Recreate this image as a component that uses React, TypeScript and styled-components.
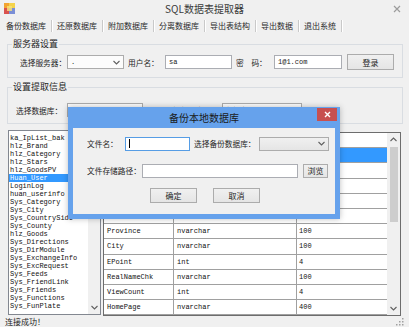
import React from "react";
import styled, { createGlobalStyle } from "styled-components";

const CJK = `"Noto Sans CJK SC", "Liberation Sans", sans-serif`;
const MONO = `"Liberation Mono", "Noto Sans CJK SC", monospace`;

const GlobalStyle = createGlobalStyle`
  html, body {
    margin: 0;
    padding: 0;
    background: #f0f0f0;
  }
  body {
    font-family: ${CJK};
  }
`;

const Window = styled.div`
  position: relative;
  width: 409px;
  height: 327px;
  overflow: hidden;
  background: #f0f0f0;
  display: flex;
  flex-direction: column;
  font-family: ${CJK};
  color: #1e1e1e;
`;

const TitleBar = styled.div`
  flex: none;
  height: 17px;
  display: grid;
  grid-template-columns: 24px 1fr 24px;
  align-items: center;
`;

const Title = styled.div`
  text-align: center;
  font-size: 10px;
  line-height: 17px;
  color: #3a3a3a;
`;

const CloseGlyph = styled.div`
  display: flex;
  justify-content: center;
`;

const TabBar = styled.div`
  flex: none;
  height: 17px;
  display: flex;
  align-items: center;
  padding-left: 1px;
`;

const Tab = styled.div`
  padding: 0 5px;
  font-size: 8px;
  line-height: 12px;
  color: #2a2a2a;
  border-right: 1px solid #c9c9c9;
  box-shadow: 1px 0 0 #fff;
  white-space: nowrap;
`;

const Group = styled.fieldset<{ $mt: number; $pt: number; $pb: number }>`
  margin: ${(p) => p.$mt}px 6px 0 7px;
  padding: ${(p) => p.$pt}px 0 ${(p) => p.$pb}px 0;
  border: 1px solid #d9dde2;
  border-radius: 0;
  min-width: 0;
`;

const Legend = styled.legend`
  margin-left: 4px;
  padding: 0 1px;
  font-size: 9px;
  line-height: 12px;
  color: #1e1e1e;
`;

const Row = styled.div<{ $pl?: number; $mt?: number; $h?: number }>`
  display: flex;
  align-items: center;
  height: ${(p) => p.$h ?? 16}px;
  padding-left: ${(p) => p.$pl ?? 0}px;
  margin-top: ${(p) => p.$mt ?? 0}px;
`;

const Label = styled.div<{ $w: number }>`
  flex: none;
  width: ${(p) => p.$w}px;
  font-size: 7.7px;
  line-height: 11px;
  white-space: pre;
  overflow: hidden;
  color: #1e1e1e;
`;

const Gap = styled.div<{ $w: number }>`
  flex: none;
  width: ${(p) => p.$w}px;
`;

const Combo = styled.div<{ $w: number; $gray?: boolean }>`
  flex: none;
  box-sizing: border-box;
  width: ${(p) => p.$w}px;
  height: 14px;
  border: 1px solid #acacac;
  background: ${(p) =>
    p.$gray ? "linear-gradient(#f0f0f0, #e5e5e5)" : "#fcfcfc"};
  display: flex;
  align-items: center;
  justify-content: space-between;
  padding: 0 3px 0 3px;
  font-family: ${MONO};
  font-size: 7px;
  color: #222;
`;

const TextBox = styled.div<{ $w: number; $focus?: boolean }>`
  flex: none;
  box-sizing: border-box;
  width: ${(p) => p.$w}px;
  height: 14px;
  border: 1px solid ${(p) => (p.$focus ? "#569de5" : "#abadb3")};
  background: #fff;
  display: flex;
  align-items: center;
  padding-left: 3px;
  font-family: ${MONO};
  font-size: 7px;
  color: #222;
`;

const Caret = styled.div`
  width: 1px;
  height: 9px;
  background: #000;
`;

const Button = styled.div<{ $w: number; $h: number }>`
  flex: none;
  box-sizing: border-box;
  width: ${(p) => p.$w}px;
  height: ${(p) => p.$h}px;
  border: 1px solid #acacac;
  background: linear-gradient(#f0f0f0, #e5e5e5);
  display: flex;
  align-items: center;
  justify-content: center;
  font-size: 8px;
  color: #1e1e1e;
`;

const Split = styled.div`
  flex: 1;
  display: flex;
  gap: 2px;
  padding: 0 8px 0 8px;
  margin-top: 6px;
  min-height: 0;
`;

const ListBox = styled.div`
  flex: none;
  box-sizing: border-box;
  width: 93px;
  height: 185px;
  border: 1px solid #828790;
  background: #fff;
  display: flex;
`;

const ListItems = styled.div`
  flex: 1;
  padding-top: 3px;
  overflow: hidden;
`;

const ListItem = styled.div<{ $sel?: boolean }>`
  height: 8px;
  line-height: 8px;
  padding-left: 1px;
  font-family: ${MONO};
  font-size: 7px;
  white-space: nowrap;
  background: ${(p) => (p.$sel ? "#3399ff" : "transparent")};
  color: ${(p) => (p.$sel ? "#fff" : "#111")};
`;

const ScrollCol = styled.div<{ $w: number }>`
  flex: none;
  width: ${(p) => p.$w}px;
  background: #f0f0f0;
  display: flex;
  flex-direction: column;
  align-items: center;
`;

const Arrow = styled.div`
  flex: none;
  width: 100%;
  height: 13px;
  display: flex;
  align-items: center;
  justify-content: center;
`;

const Thumb = styled.div<{ $h: number }>`
  flex: none;
  width: 8px;
  height: ${(p) => p.$h}px;
  margin-top: 1px;
  background: #cdcdcd;
`;

const Spacer = styled.div`
  flex: 1;
`;

const DataGrid = styled.div`
  flex: none;
  box-sizing: border-box;
  width: 298px;
  height: 184px;
  margin-top: 2px;
  border: 1px solid #6d6d6d;
  background: #fff;
  display: flex;
`;

const GridBody = styled.div`
  flex: 1;
  overflow: hidden;
`;

const GridRow = styled.div<{ $sel?: boolean }>`
  box-sizing: border-box;
  height: 15.2px;
  display: grid;
  grid-template-columns: 70px 123px 1fr;
  border-bottom: 1px solid #a0a0a0;
  background: ${(p) => (p.$sel ? "#3399ff" : "#fff")};
  color: ${(p) => (p.$sel ? "#fff" : "#111")};
`;

const Cell = styled.div`
  box-sizing: border-box;
  border-right: 1px solid #a0a0a0;
  padding-left: 3px;
  display: flex;
  align-items: center;
  font-family: ${MONO};
  font-size: 7px;
  white-space: nowrap;
  overflow: hidden;
  &:last-child {
    border-right: none;
    padding-left: 2px;
  }
`;

const StatusBar = styled.div`
  flex: none;
  height: 11px;
  display: flex;
  align-items: center;
  justify-content: space-between;
  padding: 0 5px;
  font-size: 8px;
  line-height: 11px;
`;

const Dialog = styled.div`
  position: absolute;
  left: 68px;
  top: 107px;
  width: 272px;
  height: 112px;
  box-sizing: border-box;
  padding: 0 5px 5px;
  background: #66a2ec;
  display: flex;
  flex-direction: column;
  box-shadow: 0 0 6px rgba(0, 0, 0, 0.25);
`;

const DialogTitle = styled.div`
  flex: none;
  height: 21px;
  display: grid;
  grid-template-columns: 1fr auto 1fr;
`;

const DialogTitleText = styled.div`
  grid-column: 2;
  font-size: 10px;
  line-height: 21px;
  color: #1a1a1a;
`;

const DialogClose = styled.div`
  grid-column: 3;
  justify-self: end;
  margin-top: 1px;
  margin-right: -2px;
  width: 20px;
  height: 13px;
  background: #c75050;
  display: flex;
  align-items: center;
  justify-content: center;
`;

const DialogBody = styled.div`
  flex: 1;
  background: #f0f0f0;
  padding: 8px 0 0 14px;
  display: flex;
  flex-direction: column;
`;

const Chevron = ({ up }: { up?: boolean }) => (
  <svg width="7" height="5" viewBox="0 0 7 5">
    <path
      d={up ? "M0.5 4 L3.5 1 L6.5 4" : "M0.5 1 L3.5 4 L6.5 1"}
      fill="none"
      stroke="#606060"
      strokeWidth="1.1"
    />
  </svg>
);

const AppIcon = () => (
  <svg width="11" height="11" viewBox="0 0 11 11" style={{ marginLeft: 4 }}>
    <rect x="0" y="0" width="5" height="5" fill="#f2a431" />
    <rect x="5" y="0" width="6" height="5" fill="#f4d34a" />
    <rect x="0" y="5" width="5" height="6" fill="#d9534f" />
    <rect x="5" y="5" width="6" height="6" fill="#7b8fd6" />
    <rect x="3" y="3" width="5" height="5" fill="#f7e27a" opacity="0.8" />
  </svg>
);

const Grip = () => (
  <svg width="8" height="8" viewBox="0 0 8 8">
    {[
      [6, 0],
      [6, 3],
      [3, 3],
      [6, 6],
      [3, 6],
      [0, 6],
    ].map(([x, y], i) => (
      <rect key={i} x={x} y={y} width="1.5" height="1.5" fill="#a0a0a0" />
    ))}
  </svg>
);

const tabs = [
  "备份数据库",
  "还原数据库",
  "附加数据库",
  "分离数据库",
  "导出表结构",
  "导出数据",
  "退出系统",
];

const tables = [
  "ka_IpList_bak",
  "hlz_Brand",
  "hlz_Category",
  "hlz_Stars",
  "hlz_GoodsPV",
  "Huan_User",
  "LoginLog",
  "huan_userinfo",
  "Sys_Category",
  "Sys_City",
  "Sys_CountrySide",
  "Sys_County",
  "hlz_Goods",
  "Sys_Directions",
  "Sys_DirModule",
  "Sys_ExchangeInfo",
  "Sys_ExcRequest",
  "Sys_Feeds",
  "Sys_FriendLink",
  "Sys_Friends",
  "Sys_Functions",
  "Sys_FunPlate",
];

// first rows sit under the dialog, nothing of their text shows
const columns = [
  ["", "", ""],
  ["", "", ""],
  ["", "", ""],
  ["", "", ""],
  ["", "", ""],
  ["", "", ""],
  ["Province", "nvarchar", "100"],
  ["City", "nvarchar", "100"],
  ["EPoint", "int", "4"],
  ["RealNameChk", "nvarchar", "100"],
  ["ViewCount", "int", "4"],
  ["HomePage", "nvarchar", "400"],
];

export default function App() {
  return (
    <Window>
      <GlobalStyle />
      <TitleBar>
        <AppIcon />
        <Title>SQL数据表提取器</Title>
        <CloseGlyph>
          <svg width="8" height="8" viewBox="0 0 8 8">
            <path d="M1 1 L7 7 M7 1 L1 7" stroke="#9c9c9c" strokeWidth="1.2" />
          </svg>
        </CloseGlyph>
      </TitleBar>

      <TabBar>
        {tabs.map((t) => (
          <Tab key={t}>{t}</Tab>
        ))}
      </TabBar>

      <Group $mt={4} $pt={4} $pb={7}>
        <Legend>服务器设置</Legend>
        <Row $pl={12}>
          <Label $w={47}>选择服务器：</Label>
          <Combo $w={57}>
            <span>.</span>
            <Chevron />
          </Combo>
          <Gap $w={4} />
          <Label $w={37}>用户名：</Label>
          <TextBox $w={67}>sa</TextBox>
          <Gap $w={4} />
          <Label $w={38}>{"密　码："}</Label>
          <TextBox $w={68}>1@1.com</TextBox>
          <Gap $w={5} />
          <Button $w={47} $h={16}>
            登录
          </Button>
        </Row>
      </Group>

      <Group $mt={3} $pt={9} $pb={5}>
        <Legend>设置提取信息</Legend>
        <Row $pl={8}>
          <Label $w={51}>选择数据库：</Label>
          <Combo $w={76}>
            <span />
            <Chevron />
          </Combo>
          <Gap $w={22} />
          <Label $w={57}>选择数据表：</Label>
          <Combo $w={80}>
            <span>数据表1</span>
            <Chevron />
          </Combo>
        </Row>
      </Group>

      <Split>
        <ListBox>
          <ListItems>
            {tables.map((t) => (
              <ListItem key={t} $sel={t === "Huan_User"}>
                {t}
              </ListItem>
            ))}
          </ListItems>
          <ScrollCol $w={12}>
            <Arrow>
              <Chevron up />
            </Arrow>
            <Spacer />
            <Arrow>
              <Chevron />
            </Arrow>
          </ScrollCol>
        </ListBox>

        <DataGrid>
          <GridBody>
            {columns.map((c, i) => (
              <GridRow key={i} $sel={i === 1}>
                <Cell>{c[0]}</Cell>
                <Cell>{c[1]}</Cell>
                <Cell>{c[2]}</Cell>
              </GridRow>
            ))}
          </GridBody>
          <ScrollCol $w={13}>
            <Arrow>
              <Chevron up />
            </Arrow>
            <Thumb $h={75} />
            <Spacer />
            <Arrow>
              <Chevron />
            </Arrow>
          </ScrollCol>
        </DataGrid>
      </Split>

      <StatusBar>
        <span>连接成功！</span>
        <Grip />
      </StatusBar>

      <Dialog>
        <DialogTitle>
          <DialogTitleText>备份本地数据库</DialogTitleText>
          <DialogClose>
            <svg width="7" height="7" viewBox="0 0 7 7">
              <path d="M1 1 L6 6 M6 1 L1 6" stroke="#fff" strokeWidth="1.4" />
            </svg>
          </DialogClose>
        </DialogTitle>
        <DialogBody>
          <Row $h={15}>
            <Label $w={38}>文件名：</Label>
            <TextBox $w={65} $focus>
              <Caret />
            </TextBox>
            <Gap $w={4} />
            <Label $w={65}>选择备份数据库：</Label>
            <Combo $w={70} $gray>
              <span />
              <Chevron />
            </Combo>
          </Row>
          <Row $h={15} $mt={12}>
            <Label $w={55}>文件存储路径：</Label>
            <TextBox $w={156} />
            <Gap $w={5} />
            <Button $w={25} $h={14}>
              浏览
            </Button>
          </Row>
          <Row $h={15} $mt={10} $pl={63}>
            <Button $w={47} $h={15}>
              确定
            </Button>
            <Gap $w={16} />
            <Button $w={47} $h={15}>
              取消
            </Button>
          </Row>
        </DialogBody>
      </Dialog>
    </Window>
  );
}
